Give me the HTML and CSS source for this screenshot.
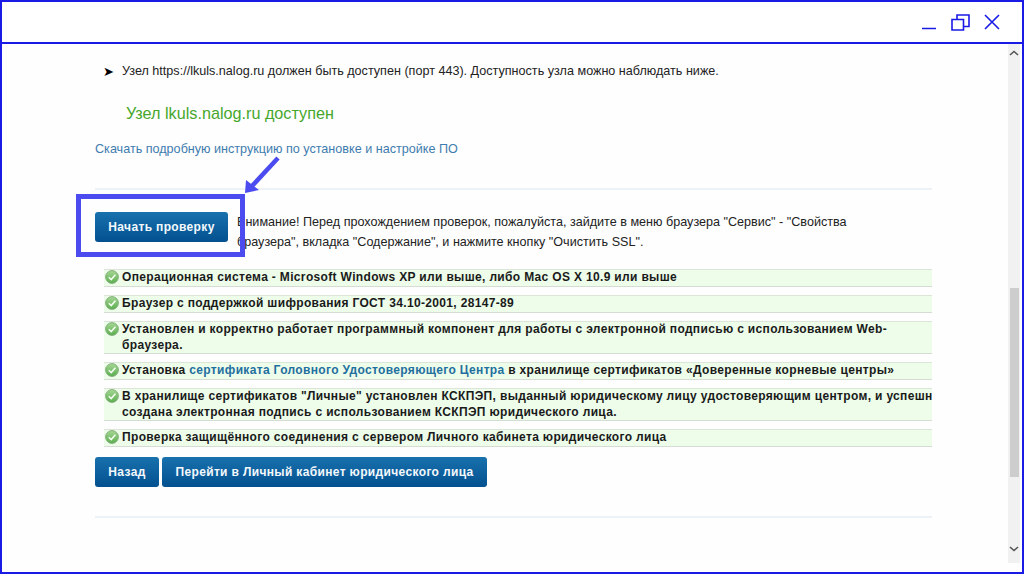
FILE: index.html
```html
<!DOCTYPE html>
<html lang="ru">
<head>
<meta charset="utf-8">
<title>Проверка</title>
<link rel="stylesheet" href="styles.css">
</head>
<body>
<div class="window">
  <header class="titlebar">
    <svg class="ctl ctl-min" width="14" height="16" viewBox="0 0 14 16"><path d="M0 14.5H14" stroke="#1a1ae6" stroke-width="1.5" fill="none"/></svg>
    <svg class="ctl ctl-max" width="19" height="17" viewBox="0 0 19 17"><path d="M1 5.5H12.5V16H1ZM6 5.5V1H18V12.5H12.5" stroke="#1a1ae6" stroke-width="1.6" fill="none"/></svg>
    <svg class="ctl" width="16" height="16" viewBox="0 0 16 16"><path d="M1 1L15 15M15 1L1 15" stroke="#1a1ae6" stroke-width="1.6" fill="none"/></svg>
  </header>
  <div class="viewport">
    <main class="page">
      <p class="bullet"><span class="arrowhead">➤</span>Узел https://lkuls.nalog.ru должен быть доступен (порт 443). Доступность узла можно наблюдать ниже.</p>
      <p class="status">Узел lkuls.nalog.ru доступен</p>
      <a class="link" href="#">Скачать подробную инструкцию по установке и настройке ПО</a>
      <hr class="rule rule-top">
      <section class="start">
        <button class="btn btn-start">Начать проверку</button>
        <p class="note">Внимание! Перед прохождением проверок, пожалуйста, зайдите в меню браузера "Сервис" - "Свойства браузера", вкладка "Содержание", и нажмите кнопку "Очистить SSL".</p>
      </section>
      <ul class="checks">
        <li class="check"><svg class="ok" viewBox="0 0 14 14"><use href="#ok"/></svg><span>Операционная система - Microsoft Windows XP или выше, либо Mac OS X 10.9 или выше</span></li>
        <li class="check"><svg class="ok" viewBox="0 0 14 14"><use href="#ok"/></svg><span>Браузер с поддержкой шифрования ГОСТ 34.10-2001, 28147-89</span></li>
        <li class="check tall"><svg class="ok" viewBox="0 0 14 14"><use href="#ok"/></svg><span>Установлен и корректно работает программный компонент для работы с электронной подписью с использованием Web-<br>браузера.</span></li>
        <li class="check"><svg class="ok" viewBox="0 0 14 14"><use href="#ok"/></svg><span>Установка <a class="cert" href="#">сертификата Головного Удостоверяющего Центра</a> в хранилище сертификатов «Доверенные корневые центры»</span></li>
        <li class="check tall"><svg class="ok" viewBox="0 0 14 14"><use href="#ok"/></svg><span>В хранилище сертификатов "Личные" установлен КСКПЭП, выданный юридическому лицу удостоверяющим центром, и успешно<br>создана электронная подпись с использованием КСКПЭП юридического лица.</span></li>
        <li class="check"><svg class="ok" viewBox="0 0 14 14"><use href="#ok"/></svg><span>Проверка защищённого соединения с сервером Личного кабинета юридического лица</span></li>
      </ul>
      <div class="actions">
        <button class="btn btn-back">Назад</button>
        <button class="btn btn-go">Перейти в Личный кабинет юридического лица</button>
      </div>
      <hr class="rule rule-bottom">
    </main>
    <aside class="scrollbar">
      <svg class="sb-arrow" width="10" height="6" viewBox="0 0 10 6"><path d="M1 5L5 1.5L9 5" stroke="#555" stroke-width="1.6" fill="none"/></svg>
      <div class="thumb"></div>
      <svg class="sb-arrow" width="10" height="6" viewBox="0 0 10 6"><path d="M1 1L5 4.5L9 1" stroke="#555" stroke-width="1.6" fill="none"/></svg>
    </aside>
  </div>
  <div class="callout"></div>
  <svg class="pointer" width="40" height="44" viewBox="0 0 40 44"><path d="M35 6L9 34" stroke="#4b4bf0" stroke-width="4.5" fill="none"/><path d="M2 41L3 28L16 38Z" fill="#4b4bf0"/></svg>
</div>
<svg class="defs" width="0" height="0">
  <defs>
    <linearGradient id="okfill" x1="0" y1="0" x2="0" y2="1"><stop offset="0" stop-color="#a5d894"/><stop offset="1" stop-color="#5bae4e"/></linearGradient>
    <g id="ok"><circle cx="7" cy="7" r="6.4" fill="url(#okfill)" stroke="#7fa878" stroke-width="0.9"/><path d="M3.8 7.2L6.2 9.6L10.4 4.8" stroke="#f4fbf2" stroke-width="1.6" fill="none"/></g>
  </defs>
</svg>
</body>
</html>
```
FILE: styles.css
```css
* { box-sizing: border-box; }
html, body { margin: 0; height: 100%; overflow: hidden; background: #fff; }
body { font-family: "Liberation Sans", Arial, sans-serif; }
.window { position: relative; width: 1024px; height: 574px; border: 2px solid #1a1ae6; display: flex; flex-direction: column; }
.titlebar { height: 42px; flex: none; border-bottom: 2px solid #1a1ae6; display: flex; align-items: center; justify-content: flex-end; padding: 0 22px 0 0; background: #fff; }
.ctl { display: block; }
.ctl-min { margin-right: 15px; }
.ctl-max { margin-right: 14px; }
.viewport { flex: 1; display: flex; min-height: 0; background: #fefefe; }
.page { flex: none; width: 1006px; padding: 0 76px 0 93px; }
.bullet { margin: 20px 0 0; height: 15px; font-size: 12.6px; line-height: 15px; color: #222; display: flex; padding-left: 8px; white-space: nowrap; }
.arrowhead { width: 19px; flex: none; font-size: 13px; color: #000; }
.status { margin: 24px 0 0; height: 20px; padding-left: 31px; font-size: 16.2px; line-height: 20px; color: #47a72d; }
.link { display: block; margin-top: 19px; font-size: 12.6px; line-height: 15px; color: #3f7cae; text-decoration: none; }
.rule { margin: 0; border: 0; height: 2px; background: #edf2f7; }
.rule-top { margin-top: 31px; }
.start { display: flex; margin-top: 22px; height: 31px; }
.btn { display: block; border: 0; border-radius: 3px; height: 30px; padding: 0; font-family: inherit; font-size: 12px; font-weight: bold; letter-spacing: 0.35px; color: #f3f8fc; background: linear-gradient(#1871ad, #03508f); }
.btn-start { width: 133px; flex: none; }
.note { margin: -0.5px 0 0 9px; width: 640px; font-size: 12.6px; line-height: 20px; color: #222; }
.checks { list-style: none; margin: 26px 0 0 9px; padding: 0; }
.check { height: 18px; margin-bottom: 8px; display: flex; align-items: flex-start; overflow: hidden; background: #edfdea; border-top: 1px solid #dbe6d8; border-bottom: 1px solid #d5dcd3; font-size: 12px; font-weight: bold; line-height: 16px; letter-spacing: 0.34px; color: #1a1a1a; white-space: nowrap; }
.check span { margin: -1px 0 0 3px; }
.tall { height: 33px; }
.ok { width: 14px; height: 14px; flex: none; margin: 0 0 0 1px; }
.cert { color: #1f6f9f; text-decoration: none; }
.actions { display: flex; gap: 3px; margin-top: 10px; }
.btn-back { width: 64px; }
.btn-go { width: 325px; }
.rule-bottom { margin-top: 29px; }
.scrollbar { flex: none; width: 12px; margin-bottom: 9px; background: #f1f1f1; display: flex; flex-direction: column; align-items: center; padding: 6px 0 11px; }
.sb-arrow { flex: none; display: block; }
.thumb { width: 9px; height: 189px; margin-top: 232px; margin-bottom: auto; background: #cdcdcd; }
.callout { position: absolute; left: 74px; top: 192px; width: 169px; height: 63px; border: 5px solid #4b4bf0; }
.pointer { position: absolute; left: 241px; top: 150px; }
.defs { position: absolute; }
```
